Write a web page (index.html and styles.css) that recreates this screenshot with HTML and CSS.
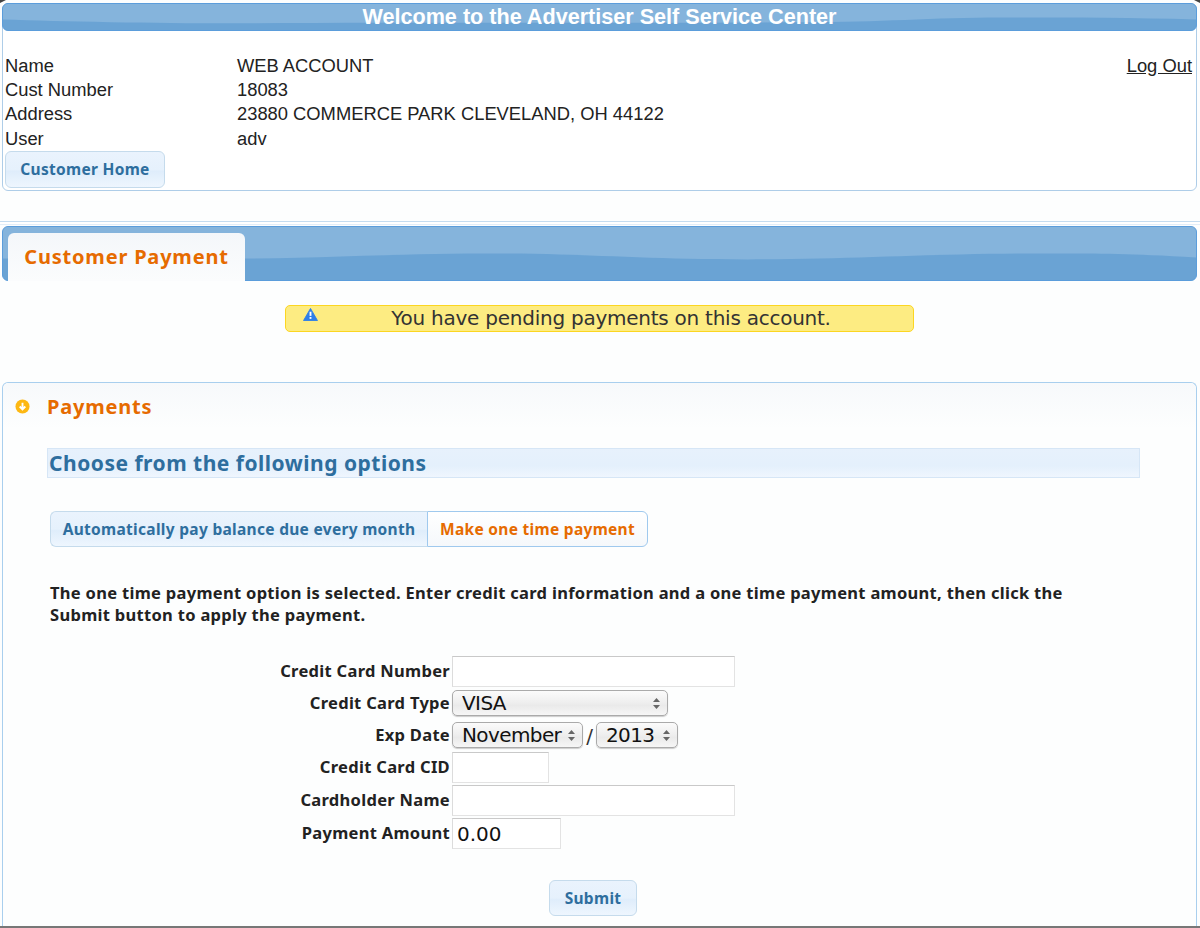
FILE: index.html
```html
<!DOCTYPE html>
<html lang="en">
<head>
<meta charset="utf-8">
<title>Advertiser Self Service Center</title>
<link rel="stylesheet" href="styles.css">
</head>
<body>
<section class="account">
  <h1 class="bar bar-top">
    <svg class="gloss" viewBox="0 0 1195 27" preserveAspectRatio="none"><path d="M0 0H1195V16C1130 14 1060 14 1000 14C930 14 880 19 800 19C640 20 400 19 230 20C150 20 60 18 0 16Z"/></svg>
    <span>Welcome to the Advertiser Self Service Center</span>
  </h1>
  <div class="account-body">
    <table class="info">
      <tr><td class="k">Name</td><td>WEB ACCOUNT</td></tr>
      <tr><td class="k">Cust Number</td><td>18083</td></tr>
      <tr><td class="k">Address</td><td>23880 COMMERCE PARK CLEVELAND, OH 44122</td></tr>
      <tr><td class="k">User</td><td>adv</td></tr>
    </table>
    <a class="logout" href="#">Log Out</a>
  </div>
  <a class="btn home" href="#">Customer Home</a>
</section>

<div class="rule"></div>

<nav class="bar bar-tabs">
  <svg class="gloss" viewBox="0 0 1195 54" preserveAspectRatio="none"><path d="M0 0H1195V31C1130 27 1090 27 1034 27C930 27 850 33 746 33C640 33 590 27 483 27C390 27 320 32 243 32C160 34 80 33 0 32Z"/></svg>
  <a class="page-tab" href="#">Customer Payment</a>
</nav>

<div class="alert">
  <svg class="alert-icon" viewBox="0 0 16 14"><path d="M8 .5 15.5 13.5H.5Z" fill="#2f7fe8" stroke="#2f7fe8" stroke-linejoin="round"/><rect x="7" y="4" width="2" height="4.5" fill="#fff"/><rect x="7" y="9.7" width="2" height="2" fill="#fff"/></svg>
  <span>You have pending payments on this account.</span>
</div>

<section class="panel">
  <header class="panel-head">
    <svg class="panel-icon" viewBox="0 0 16 16"><circle cx="8" cy="8" r="7.5" fill="#fdb813"/><path d="M8 4v6M5 8l3 3.2L11 8" fill="none" stroke="#fff" stroke-width="2"/></svg>
    <h2>Payments</h2>
  </header>
  <div class="panel-body">
    <h3 class="choose">Choose from the following options</h3>
    <div class="opts">
      <a class="opt" href="#">Automatically pay balance due every month</a>
      <a class="opt opt-on" href="#">Make one time payment</a>
    </div>
    <p class="note">The one time payment option is selected. Enter credit card information and a one time payment amount, then click the Submit button to apply the payment.</p>
    <form class="form">
      <label class="lbl row1">Credit Card Number</label>
      <div class="row1"><input class="field w-long" type="text"></div>
      <label class="lbl lbl-sel row2">Credit Card Type</label>
      <div class="row2"><select class="sel w-type"><option>VISA</option></select></div>
      <label class="lbl lbl-sel row3">Exp Date</label>
      <div class="row3 exp"><select class="sel w-month"><option>November</option></select><span class="slash">/</span><select class="sel w-year"><option>2013</option></select></div>
      <label class="lbl row4">Credit Card CID</label>
      <div class="row4"><input class="field w-cid" type="text"></div>
      <label class="lbl row5">Cardholder Name</label>
      <div class="row5"><input class="field w-long" type="text"></div>
      <label class="lbl row6">Payment Amount</label>
      <div class="row6"><input class="field w-amt" type="text" value="0.00"></div>
    </form>
    <div class="actions"><button class="btn submit" type="button">Submit</button></div>
  </div>
</section>
<div class="win-corner left"></div>
<div class="win-corner right"></div>
<div class="win-bottom"></div>
</body>
</html>
```
FILE: styles.css
```css
html, body { margin: 0; padding: 0; }
body {
  width: 1200px; height: 928px; overflow: hidden; position: relative;
  background: #fdfefe; color: #222;
  font-family: "Liberation Sans", Arial, sans-serif;
  font-size: 18.35px; padding-top: 3px; box-sizing: border-box;
}
a { color: inherit; }

.bar {
  position: relative; box-sizing: border-box; margin: 0;
  background: #6aa3d4; border: 1px solid #5b9ddb;
}
.gloss { position: absolute; left: 0; top: 0; width: 100%; height: 100%; border-radius: 5px; }
.gloss path { fill: #85b4dc; }

.account {
  height: 188px; box-sizing: border-box;
  border: 1px solid #aecde8; border-radius: 6px; background: #fff;
  position: relative; margin-left: 2px; width: 1195px;
}
.bar-top {
  height: 28px; margin: -1px -1px 0; border-radius: 6px;
  text-align: center; color: #fff; font-size: 21.6px; font-weight: bold; line-height: 26px;
}
.bar-top span { position: relative; }
.account-body { display: flex; justify-content: space-between; padding: 23px 4px 0 2px; }
.info { border-collapse: collapse; }
.info td { padding: 0; height: 24.2px; line-height: 24px; }
.k { width: 232px; }
.logout { line-height: 24px; }

.btn {
  display: inline-block; box-sizing: border-box; text-align: center; text-decoration: none;
  border: 1px solid #c5dbec; border-radius: 6px;
  background: linear-gradient(#eaf3fd 0, #e6f1fc 50%, #dfedfb 55%, #eef6fe 100%);
  color: #2e6e9e; font-family: "Noto Sans", sans-serif; font-weight: bold;
}
.home { margin: 0 0 0 2px; width: 160px; height: 37px; line-height: 35px; font-size: 15.5px; letter-spacing: .3px; }

.rule { height: 2px; margin-top: 30px; background: #fff; border-top: 1px solid #c4dcf0; border-bottom: 1px solid #e3eef8; }

.bar-tabs {
  margin: 1px 0 0 2px; width: 1195px; height: 55px; border-radius: 6px;
  padding: 6px 0 0 5px;
}
.page-tab {
  position: relative; display: block; box-sizing: border-box; width: 237px; height: 48px;
  border-radius: 6px 6px 0 0; background: linear-gradient(#f4f7fa, #fbfcfd);
  color: #e66b00; text-decoration: none; text-align: center;
  font-family: "Noto Sans", sans-serif; font-weight: bold; font-size: 20px; line-height: 48px; letter-spacing: .8px;
}

.alert {
  position: relative; box-sizing: border-box; width: 629px; height: 27px; margin: 24px 0 0 285px;
  background: #fdec82; border: 1px solid #fcd622; border-radius: 5px;
  text-align: center; font-family: "DejaVu Sans", sans-serif; font-size: 20px; line-height: 25px; color: #333; letter-spacing: -.25px;
  padding-left: 23px;
}
.alert-icon { position: absolute; left: 17px; top: 2px; width: 15px; height: 13px; }

.panel {
  margin: 50px 0 0 2px; width: 1195px; height: 546px; box-sizing: border-box;
  border: 1px solid #a9cfee; border-bottom: 0; border-radius: 6px 6px 0 0; background: #fdfefe;
}
.panel-head {
  height: 46px; display: flex; align-items: center; padding-left: 12px;
  background: linear-gradient(#f7f9fb, #fdfefe); border-radius: 6px 6px 0 0;
}
.panel-icon { width: 15px; height: 15px; margin-right: 17px; }
.panel-head h2 { margin: 0; color: #e66b00; font-family: "Noto Sans", sans-serif; font-size: 20px; font-weight: bold; letter-spacing: .8px; }

.panel-body { padding: 19px 56px 0 44px; font-family: "Noto Sans", sans-serif; }
.choose {
  margin: 0; height: 30px; box-sizing: border-box; border: 1px solid #d6e6f6;
  background: linear-gradient(#e7f1fc 0, #e4f0fc 60%, #eff6fe 100%); color: #2e6e9e;
  font-size: 21px; font-weight: bold; line-height: 28px; letter-spacing: .5px; padding-left: 1px; width: 1093px;
}
.opts { display: flex; margin: 33px 0 0 3px; }
.opt {
  box-sizing: border-box; height: 36px; line-height: 34px; text-decoration: none; text-align: center;
  font-size: 15.5px; font-weight: bold; letter-spacing: .3px;
}
.opt:first-child {
  width: 377px; border: 1px solid #c5dbec; border-right: 0; border-radius: 6px 0 0 6px; color: #2e6e9e;
  background: linear-gradient(#eaf3fd 0, #e6f1fc 50%, #dfedfb 55%, #eef6fe 100%);
}
.opt-on {
  width: 221px; border: 1px solid #9fc9ee; border-radius: 0 6px 6px 0; color: #e66b00;
  background: linear-gradient(#fff, #f5f8fb);
}
.note {
  margin: 35px 0 0 3px; width: 1045px; color: #222; font-size: 16.5px; font-weight: bold; line-height: 22px; letter-spacing: .3px;
}

.form {
  display: grid; grid-template-columns: 403px auto; column-gap: 2px; justify-content: start;
  grid-template-rows: 34px 32px 30px 33px 33px 33px; margin-top: 30px;
}
.lbl { text-align: right; font-size: 16.5px; font-weight: bold; color: #222; letter-spacing: .3px; line-height: 30px; }
.lbl-sel { line-height: 26px; }
.field {
  display: block; box-sizing: border-box; height: 31px; padding: 0 4px; border: 1px solid #e3e3e3; border-top-color: #c9c9c9; border-left-color: #dcdcdc;
  background: #fff; font-family: "DejaVu Sans", sans-serif; font-size: 20px; color: #111; outline: none; border-radius: 0;
}
.w-long { width: 283px; }
.w-cid { width: 97px; }
.w-amt { width: 109px; }
.sel {
  display: block; box-sizing: border-box; height: 26px; border: 1px solid #aaa; border-radius: 5px; padding: 0 14px 0 9px;
  appearance: none; -webkit-appearance: none; color: #111;
  font-family: "DejaVu Sans", sans-serif; font-size: 20px; line-height: 24px; letter-spacing: -.6px;
  background: url("data:image/svg+xml,%3Csvg xmlns='http://www.w3.org/2000/svg' width='7' height='11'%3E%3Cpath d='M3.5 0 7 4H0ZM3.5 11 0 7H7Z' fill='%23666'/%3E%3C/svg%3E") no-repeat right 7px center, linear-gradient(#fbfbfb, #eee 50%, #eaeaea 60%, #f6f6f6);
  box-shadow: 0 1px 1px #ccc;
}
.w-type { width: 216px; }
.w-month { width: 131px; }
.w-year { width: 82px; }
.exp { display: flex; align-items: flex-start; }
.slash { font-size: 20px; line-height: 28px; width: 13px; text-align: center; color: #333; font-family: "DejaVu Sans", sans-serif; }
.row1 { grid-row: 1; } .row2 { grid-row: 2; } .row3 { grid-row: 3; }
.row4 { grid-row: 4; } .row5 { grid-row: 5; } .row6 { grid-row: 6; }

.actions { display: flex; margin: 29px 0 0 502px; }
.submit { width: 88px; height: 36px; font-size: 15.5px; letter-spacing: .3px; padding: 0; }

.win-corner { position: absolute; top: 0; width: 6px; height: 3px; background: #444; }
.win-corner.left { left: 0; clip-path: polygon(0 0, 100% 0, 0 100%); }
.win-corner.right { right: 0; clip-path: polygon(0 0, 100% 0, 100% 100%); }
.win-bottom { position: absolute; left: 0; right: 0; bottom: 0; height: 2px; background: #777; }
```
